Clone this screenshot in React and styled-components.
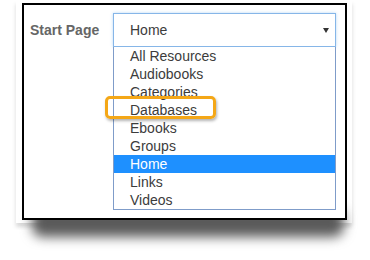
import React from "react";
import styled, { createGlobalStyle } from "styled-components";

const Global = createGlobalStyle`
  html, body { margin: 0; padding: 0; background: #fff; }
  body { font-family: Arial, "Liberation Sans", sans-serif; }
`;

const Stage = styled.div`
  width: 370px;
  height: 260px;
  padding: 0 18px 0 16px;
  box-sizing: border-box;
  overflow: hidden;
`;

const Paper = styled.div`
  position: relative;
  z-index: 0;
  width: 336px;
  box-sizing: border-box;
  padding: 3px 5px 3px 6px;
  background: #fff;
  box-shadow: -1px 4px 4px rgba(0, 0, 0, 0.08), 1px 4px 4px rgba(0, 0, 0, 0.08);

  &::before {
    content: "";
    position: absolute;
    z-index: -1;
    left: 16px;
    right: 8px;
    bottom: -14px;
    height: 30px;
    background: #5a5a5a;
    filter: blur(6px);
    border-radius: 10px;
  }
`;

const Frame = styled.div`
  border: 2px solid #000;
  height: 217px;
  box-sizing: border-box;
  background: #fff;
  display: flex;
  align-items: flex-start;
  padding: 8px 0 0 6px;
`;

const Label = styled.div`
  width: 83px;
  line-height: 34px;
  font-size: 14px;
  font-weight: bold;
  color: #666;
`;

const Select = styled.div`
  width: 223px;
  display: flex;
  flex-direction: column;
  font-size: 14px;
`;

const Header = styled.div`
  height: 34px;
  box-sizing: border-box;
  border: 1px solid #86b6e8;
  box-shadow: 0 0 3px rgba(102, 170, 235, 0.45);
  display: flex;
  align-items: center;
  justify-content: space-between;
  padding: 0 6px 0 16px;
  color: #3c3c3c;
`;

const Arrow = styled.span`
  width: 0;
  height: 0;
  border-left: 3px solid transparent;
  border-right: 3px solid transparent;
  border-top: 5px solid #333;
`;

const List = styled.div`
  border: 1px solid #7f9cc9;
  border-top: none;
  background: #fff;
`;

const Option = styled.div`
  position: relative;
  height: 18px;
  line-height: 18px;
  padding-left: 16px;
  color: ${(p) => (p.$selected ? "#fff" : "#3c3c3c")};
  background: ${(p) => (p.$selected ? "#1e90ff" : "transparent")};
  white-space: nowrap;
`;

const Callout = styled.span`
  position: absolute;
  left: -9px;
  top: -5px;
  width: 111px;
  height: 23px;
  box-sizing: border-box;
  border: 3px solid #f4a717;
  border-radius: 5px;
  box-shadow: 1px 2px 3px rgba(0, 0, 0, 0.3);
  pointer-events: none;
`;

const options = [
  "All Resources",
  "Audiobooks",
  "Categories",
  "Databases",
  "Ebooks",
  "Groups",
  "Home",
  "Links",
  "Videos",
];

export default function App() {
  return (
    <Stage>
      <Global />
      <Paper>
        <Frame>
          <Label>Start Page</Label>
          <Select>
            <Header>
              <span>Home</span>
              <Arrow />
            </Header>
            <List>
              {options.map((o) => (
                <Option key={o} $selected={o === "Home"}>
                  {o}
                  {o === "Databases" && <Callout />}
                </Option>
              ))}
            </List>
          </Select>
        </Frame>
      </Paper>
    </Stage>
  );
}
